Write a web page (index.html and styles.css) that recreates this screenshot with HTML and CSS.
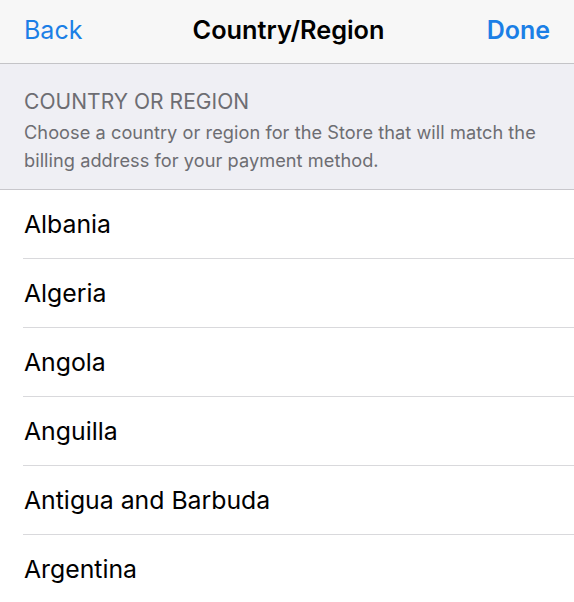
FILE: index.html
```html
<!DOCTYPE html>
<html>
<head>
<meta charset="utf-8">
<link rel="stylesheet" href="styles.css">
</head>
<body>
<div class="nav">
  <span class="nav-btn">Back</span>
  <span class="nav-title">Country/Region</span>
  <span class="nav-btn nav-done">Done</span>
</div>
<div class="section">
  <div class="section-title">COUNTRY OR REGION</div>
  <div class="section-desc">Choose a country or region for the Store that will match the billing address for your payment method.</div>
</div>
<ul class="list">
  <li class="row">Albania</li>
  <li class="row">Algeria</li>
  <li class="row">Angola</li>
  <li class="row">Anguilla</li>
  <li class="row">Antigua and Barbuda</li>
  <li class="row">Argentina</li>
</ul>
</body>
</html>
```
FILE: styles.css
```css
* { box-sizing: border-box; }
html, body { margin: 0; padding: 0; }
body {
  width: 574px;
  height: 602px;
  overflow: hidden;
  background: #ffffff;
  font-family: Inter, "Liberation Sans", sans-serif;
  color: #000;
}
.nav {
  height: 64px;
  background: #f7f7f7;
  border-bottom: 1px solid #c4c4c7;
  display: flex;
  align-items: center;
  justify-content: space-between;
  padding: 0 24px 4px 24px;
}
.nav-btn {
  color: #1b7fe6;
  font-size: 25px;
  letter-spacing: 0;
}
.nav-done { font-weight: 600; font-size: 25px; }
.nav-title {
  font-size: 25.3px;
  font-weight: 600;
  letter-spacing: 0;
  margin-left: 8px;
}
.section {
  background: #efeff4;
  border-bottom: 1px solid #c8c7cc;
  padding: 26px 24px 16px;
  color: #6d6d72;
  height: 126px;
}
.section-title {
  font-size: 21px;
  line-height: 24px;
  margin-bottom: 4px;
  letter-spacing: 0.05px;
}
.section-desc {
  font-size: 18.2px;
  line-height: 28px;
  letter-spacing: 0.05px;
}
.list { list-style: none; margin: 0; padding: 0 0 0 23px; }
.row {
  height: 69px;
  border-bottom: 1px solid #d9d9dc;
  display: flex;
  align-items: center;
  font-size: 24.8px;
  padding-left: 1px;
  letter-spacing: 0;
}
```
